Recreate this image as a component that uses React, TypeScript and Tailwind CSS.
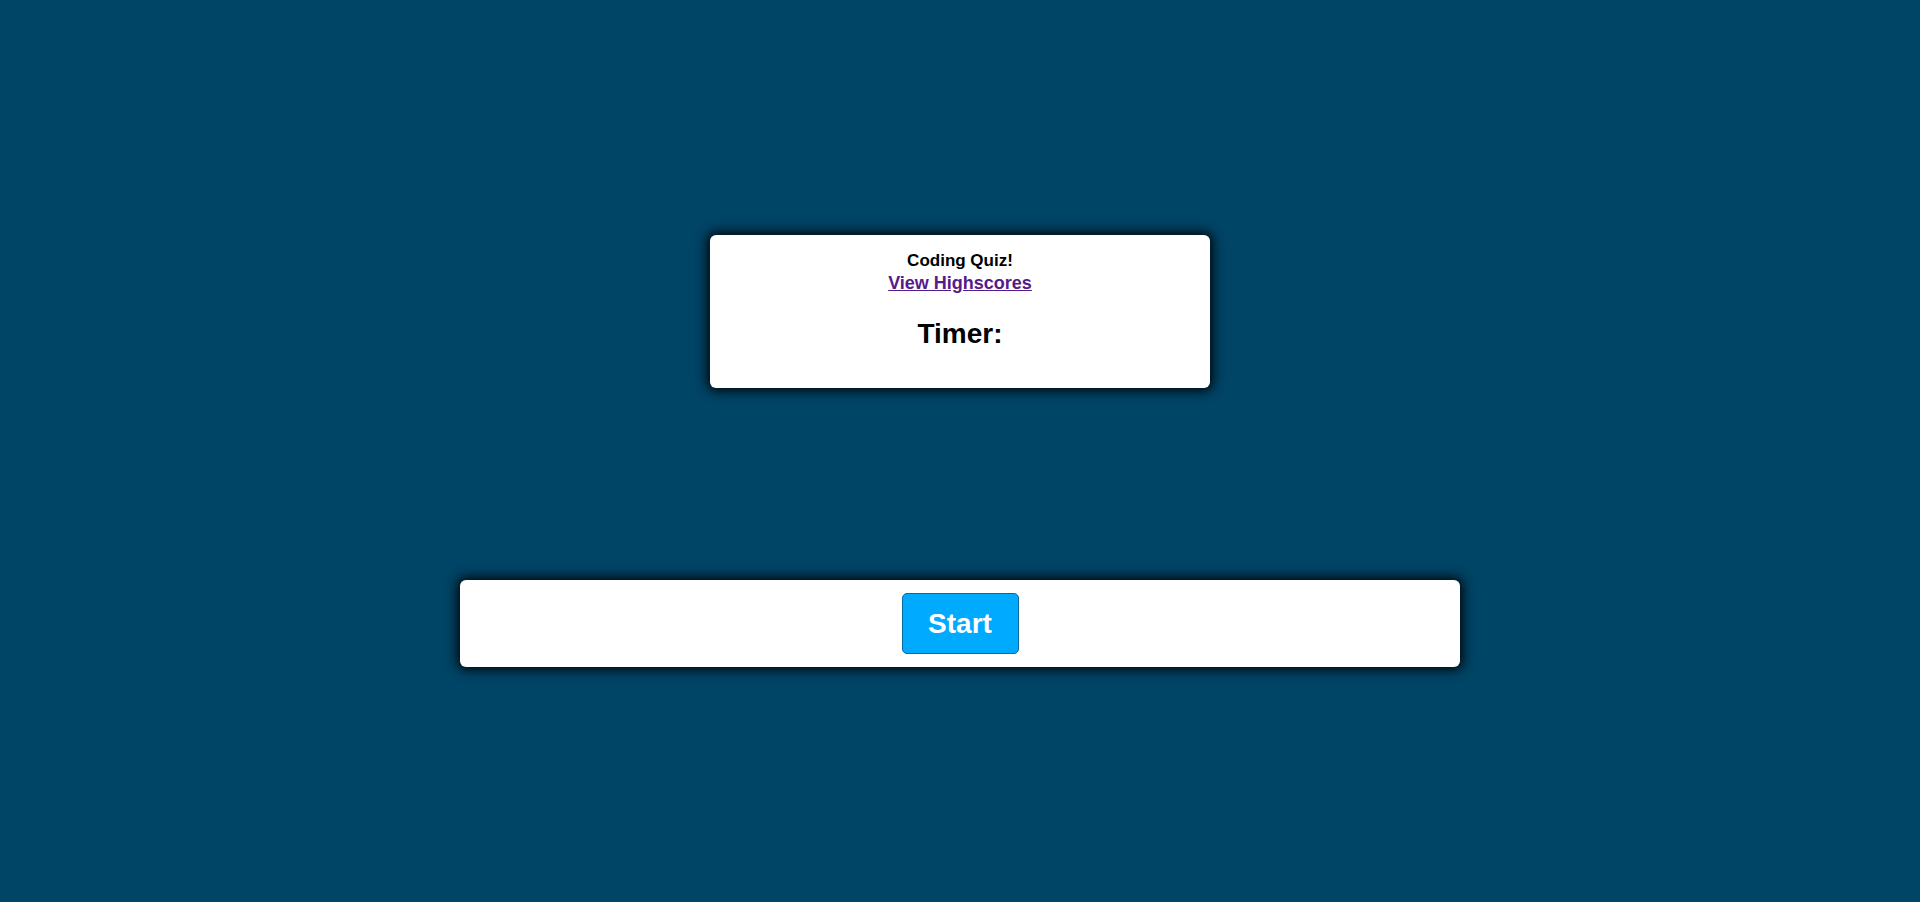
export default function App() {
  return (
    <div
      className="min-h-[902px] w-full bg-[#004466] flex flex-col items-center pt-[235px]"
      style={{ fontFamily: '"Liberation Sans", Arial, sans-serif' }}
    >
      {/* Header card */}
      <header className="w-[500px] h-[153px] bg-white rounded-[6px] shadow-[0_0_12px_3px_rgba(0,0,0,0.9)] flex flex-col items-center pt-[15px]">
        <h1 className="text-[17px] leading-[21px] font-bold text-black">Coding Quiz!</h1>
        <a href="#" className="mt-[1px] text-[18px] leading-[22px] font-bold text-[#551a8b] underline">
          View Highscores
        </a>
        <h2 className="mt-[24px] text-[28px] leading-[32px] font-bold text-black">Timer:</h2>
      </header>

      {/* Start card */}
      <section className="mt-[192px] w-[1000px] h-[87px] bg-white rounded-[6px] shadow-[0_0_12px_3px_rgba(0,0,0,0.9)] flex items-center justify-center">
        <button className="w-[117px] h-[61px] rounded-[5px] bg-[#00aaff] border border-[#0a6a9a] text-white text-[28px] font-bold">
          Start
        </button>
      </section>
    </div>
  );
}
